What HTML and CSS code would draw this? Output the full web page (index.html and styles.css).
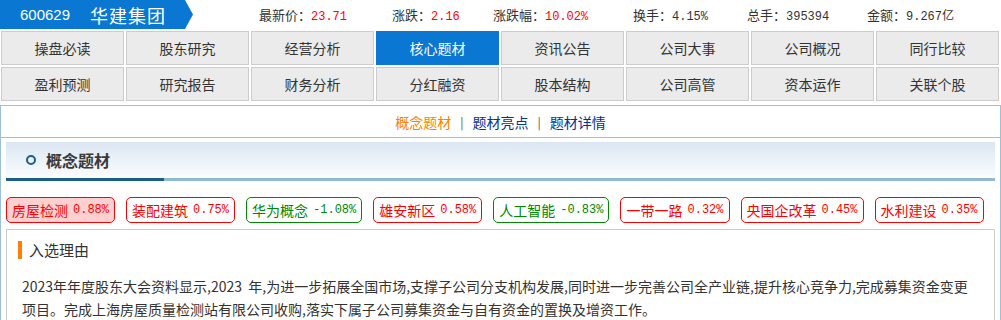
FILE: index.html
```html
<!DOCTYPE html>
<html>
<head>
  <title>华建集团 - 核心题材</title>
  <meta charset="UTF-8">
  <link rel="stylesheet" href="styles.css">
</head>
<body>
  <div class="top-bar">
    <div class="stock-badge">
      <span class="stock-code">600629</span>
      <span class="stock-name">华建集团</span>
    </div>
    <div class="quote-list">
      <span class="quote">最新价：<b class="num up">23.71</b></span>
      <span class="quote">涨跌：<b class="num up">2.16</b></span>
      <span class="quote">涨跌幅：<b class="num up">10.02%</b></span>
      <span class="quote">换手：<b class="num">4.15%</b></span>
      <span class="quote">总手：<b class="num">395394</b></span>
      <span class="quote">金额：<b class="num">9.267亿</b></span>
    </div>
  </div>

  <div class="nav-grid">
    <a class="nav-btn">操盘必读</a>
    <a class="nav-btn">股东研究</a>
    <a class="nav-btn">经营分析</a>
    <a class="nav-btn active">核心题材</a>
    <a class="nav-btn">资讯公告</a>
    <a class="nav-btn">公司大事</a>
    <a class="nav-btn">公司概况</a>
    <a class="nav-btn">同行比较</a>
    <a class="nav-btn">盈利预测</a>
    <a class="nav-btn">研究报告</a>
    <a class="nav-btn">财务分析</a>
    <a class="nav-btn">分红融资</a>
    <a class="nav-btn">股本结构</a>
    <a class="nav-btn">公司高管</a>
    <a class="nav-btn">资本运作</a>
    <a class="nav-btn">关联个股</a>
  </div>

  <div class="panel">
    <div class="sub-tabs">
      <a class="sub-tab current">概念题材</a>
      <span class="sep">|</span>
      <a class="sub-tab">题材亮点</a>
      <span class="sep">|</span>
      <a class="sub-tab">题材详情</a>
    </div>

    <div class="panel-body">
      <div class="section-head">
        <span class="ring"></span>
        <h2>概念题材</h2>
      </div>

      <div class="tag-list">
        <span class="tag up selected">房屋检测 <span class="num">0.88%</span></span>
        <span class="tag up">装配建筑 <span class="num">0.75%</span></span>
        <span class="tag down">华为概念 <span class="num">-1.08%</span></span>
        <span class="tag up">雄安新区 <span class="num">0.58%</span></span>
        <span class="tag down">人工智能 <span class="num">-0.83%</span></span>
        <span class="tag up">一带一路 <span class="num">0.32%</span></span>
        <span class="tag up">央国企改革 <span class="num">0.45%</span></span>
        <span class="tag up">水利建设 <span class="num">0.35%</span></span>
      </div>

      <div class="reason-box">
        <h3 class="reason-title">入选理由</h3>
        <p class="reason-text">2023年年度股东大会资料显示,2023&nbsp; 年,为进一步拓展全国市场,支撑子公司分支机构发展,同时进一步完善公司全产业链,提升核心竞争力,完成募集资金变更项目。完成上海房屋质量检测站有限公司收购,落实下属子公司募集资金与自有资金的置换及增资工作。</p>
      </div>
    </div>
  </div>
</body>
</html>
```

FILE: styles.css
```css
:root {
  --blue: #0a78d2;
  --line: #9cc0d8;
  --text: #333;
  --red: #f00;
  --green: #080;
}
body {
  margin: 0;
  width: 1001px;
  font-family: "Noto Sans CJK SC", "Noto Sans", sans-serif;
  font-size: 14px;
  color: var(--text);
  background: #fff;
}
.num {
  font-family: "Liberation Mono", "DejaVu Sans Mono", "Noto Sans CJK SC", monospace;
  font-weight: normal;
}
.up { color: var(--red); }

/* top quote bar */
.top-bar {
  display: flex;
  align-items: center;
  height: 29px;
  margin-bottom: 2px;
}
.stock-badge {
  width: 193px;
  height: 29px;
  background: var(--blue);
  color: #fff;
  display: flex;
  align-items: center;
  clip-path: polygon(0 0, 185px 0, 193px 50%, 185px 100%, 0 100%);
}
.stock-code {
  font-family: "Liberation Sans", sans-serif;
  font-size: 15px;
  margin-left: 20px;
}
.stock-name {
  font-size: 18px;
  margin-left: 20px;
  letter-spacing: 1px;
}
.quote-list {
  display: grid;
  grid-template-columns: 133px 101px 140px 114px 120px auto;
  margin-left: 66px;
  font-size: 13px;
  white-space: nowrap;
}
.quote .num {
  font-size: 12px;
}

/* navigation buttons */
.nav-grid {
  display: grid;
  grid-template-columns: repeat(8, 123px);
  grid-auto-rows: 34px;
  gap: 2px;
  padding-left: 1px;
}
.nav-btn {
  display: flex;
  align-items: center;
  justify-content: center;
  background: #ebebeb;
  border: 1px solid #ccc;
  font-size: 14px;
  color: #333;
  cursor: pointer;
}
.nav-btn.active {
  background: var(--blue);
  border-color: var(--blue);
  color: #fff;
}

/* main panel */
.panel {
  margin-top: 4px;
  border: 1px solid var(--line);
  border-bottom: none;
  width: 999px;
}
.sub-tabs {
  height: 31px;
  border-bottom: 1px solid var(--line);
  display: flex;
  align-items: center;
  justify-content: center;
  gap: 9px;
  font-size: 14px;
}
.sub-tab {
  color: #039;
  cursor: pointer;
}
.sub-tab.current {
  color: #ff7f00;
}
.sep {
  color: #555;
  font-size: 12px;
}
.panel-body {
  padding: 4px 5px 0 5px;
}
.section-head {
  height: 36px;
  display: flex;
  align-items: center;
  padding-left: 20px;
  background: linear-gradient(to bottom, #dbe6f3, #fbfdfe);
  border-bottom: 3px solid #8fbad5;
  position: relative;
}
.section-head::after {
  content: "";
  position: absolute;
  left: 0;
  bottom: -3px;
  width: 158px;
  height: 3px;
  background: #1a5e8c;
}
.ring {
  width: 6px;
  height: 6px;
  border: 2.5px solid #1a5e8c;
  border-radius: 50%;
}
.section-head h2 {
  margin: 0 0 0 10px;
  font-size: 16px;
  font-weight: bold;
  color: #3a3a3a;
}

/* concept tags */
.tag-list {
  display: flex;
  gap: 11px;
  margin-top: 16px;
}
.tag {
  height: 24px;
  display: flex;
  align-items: center;
  gap: 5px;
  padding: 0 5px;
  border: 1px solid;
  border-radius: 5px;
  font-size: 14px;
  white-space: nowrap;
}
.tag .num {
  font-size: 12px;
}
.tag.up {
  color: var(--red);
  border-color: var(--red);
}
.tag.down {
  color: var(--green);
  border-color: var(--green);
}
.tag.selected {
  background: #ffd0d0;
}

/* reason block */
.reason-box {
  margin-top: 6px;
  border: 1px solid #ccc;
  border-bottom: none;
  padding: 11px 24px 0 15px;
  width: 948px;
}
.reason-title {
  margin: 0;
  font-size: 15px;
  font-weight: normal;
  color: #333;
  line-height: 18px;
  border-left: 4px solid #ff8000;
  padding-left: 7px;
  margin-left: -4px;
}
.reason-text {
  margin: 16px 0 0 0;
  font-size: 14px;
  line-height: 23px;
  color: #333;
}
```
